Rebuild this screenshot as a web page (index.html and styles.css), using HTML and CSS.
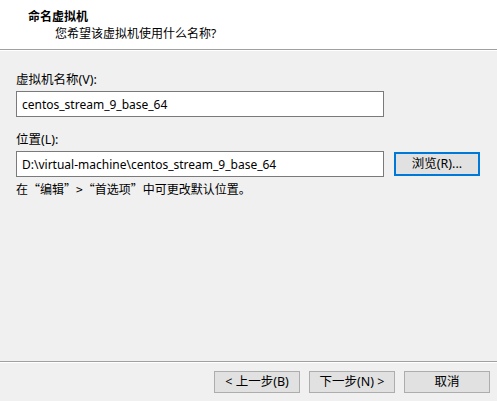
FILE: index.html
```html
<!doctype html>
<html lang="zh-CN">
<head>
	<meta charset="UTF-8">
	<title>新建虚拟机向导</title>
	<link rel="stylesheet" href="styles.css">
</head>
<body>
	<div class="wizard">
		<div class="head">
			<div class="head-title">命名虚拟机</div>
			<div class="head-sub">您希望该虚拟机使用什么名称?</div>
		</div>
		<div class="body">
			<label class="lbl">虚拟机名称(V):</label>
			<div class="row">
				<input class="txt" type="text" value="centos_stream_9_base_64">
			</div>
			<label class="lbl lbl-2">位置(L):</label>
			<div class="row">
				<input class="txt" type="text" value="D:\virtual-machine\centos_stream_9_base_64">
				<button class="btn btn-focus">浏览(R)...</button>
			</div>
			<p class="hint">在“编辑”&gt;“首选项”中可更改默认位置。</p>
		</div>
		<div class="foot">
			<button class="btn">&lt; 上一步(B)</button>
			<button class="btn">下一步(N) &gt;</button>
			<button class="btn">取消</button>
		</div>
	</div>
</body>
</html>
```

FILE: styles.css
```css
*{margin: 0;padding: 0;box-sizing: border-box;}
body{background: #f0f0f0;font-family: "Noto Sans", "Noto Sans CJK SC", sans-serif;font-size: 12px;color: #000;}
.wizard{width: 497px;height: 401px;display: flex;flex-direction: column;}

.head{background: #fff;height: 50px;padding: 8px 0 0 28px;border-bottom: 1px solid #a0a0a0;box-shadow: 0 1px 0 #fff;}
.head-title{font-weight: bold;line-height: 17px;}
.head-sub{line-height: 17px;padding-left: 27px;}

.body{flex: 1;padding: 22px 16px 0 16px;}
.lbl{display: block;line-height: 16px;font-size: 12.5px;}
.lbl-2{margin-top: 15px;}
.row{display: flex;align-items: center;gap: 10px;margin-top: 3px;}
.txt{width: 368px;height: 26px;border: 1px solid #7a7a7a;background: #fff;padding: 0 5px;font: inherit;color: #000;outline: none;}
.hint{margin-top: 4px;line-height: 16px;font-family: "Noto Sans CJK SC", sans-serif;}

.btn{width: 86px;height: 22px;border: 1px solid #adadad;background: #e1e1e1;font: inherit;font-size: 12.5px;color: #000;line-height: 18px;}
.btn-focus{height: 24px;border: 2px solid #0078d7;}

.foot{height: 40px;border-top: 1px solid #a0a0a0;box-shadow: inset 0 1px 0 #fff;display: flex;justify-content: flex-end;gap: 9px;padding: 9px 7px 0 0;}
```
